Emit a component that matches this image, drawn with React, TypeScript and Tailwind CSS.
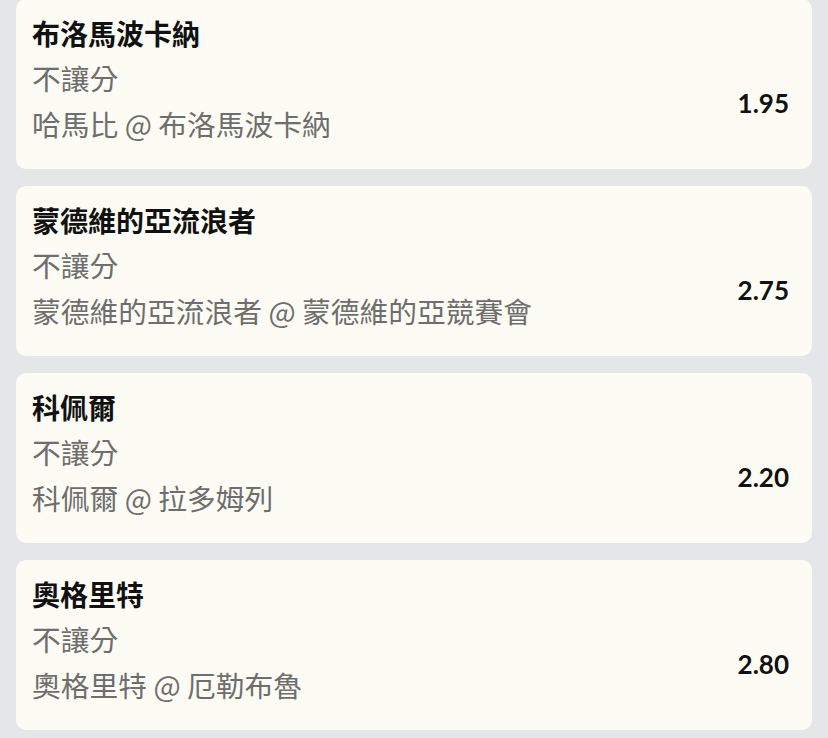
const bets = [
  { team: '布洛馬波卡納', market: '不讓分', match: '哈馬比 @ 布洛馬波卡納', odds: '1.95' },
  { team: '蒙德維的亞流浪者', market: '不讓分', match: '蒙德維的亞流浪者 @ 蒙德維的亞競賽會', odds: '2.75' },
  { team: '科佩爾', market: '不讓分', match: '科佩爾 @ 拉多姆列', odds: '2.20' },
  { team: '奧格里特', market: '不讓分', match: '奧格里特 @ 厄勒布魯', odds: '2.80' },
];

const cjk = "font-['Noto_Sans_CJK_TC','Noto_Sans_CJK_SC',sans-serif]";

export default function App() {
  return (
    <div className="min-h-screen bg-[#e5e6e8] px-4">
      <div className="-mt-px flex flex-col gap-[17px] pb-4">
        {bets.map((b) => (
          <div key={b.team} className="h-[170px] rounded-[10px] bg-[#fcfcf4] pl-[16px] pr-[23px] pt-3">
            <div className={`${cjk} text-[28px] leading-[44px] font-bold text-[#111]`}>{b.team}</div>
            <div className="flex items-center justify-between">
              <div className={`${cjk} text-[28.75px] leading-[46px] text-[#6e6e6e]`}>
                <div>{b.market}</div>
                <div>{b.match}</div>
              </div>
              <div className="mt-1 font-['Lato',sans-serif] text-[26px] font-bold text-[#111]">{b.odds}</div>
            </div>
          </div>
        ))}
      </div>
    </div>
  );
}
